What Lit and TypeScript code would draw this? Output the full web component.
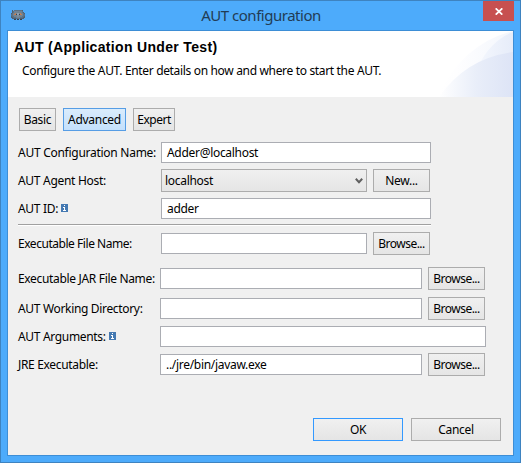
import { LitElement, html, css, svg, nothing } from "lit";
import { customElement } from "lit/decorators.js";
import { classMap } from "lit/directives/class-map.js";

interface Row {
  label: string;
  cls: string;
  value?: string;
  info?: boolean;
  combo?: boolean;
  button?: string;
}

const GENERAL: Row[] = [
  { label: "AUT Configuration Name:", cls: "name", value: "Adder@localhost" },
  { label: "AUT Agent Host:", cls: "host", value: "localhost", combo: true, button: "New..." },
  { label: "AUT ID:", cls: "id", value: "adder", info: true },
];

const EXECUTION: Row[] = [
  { label: "Executable File Name:", cls: "exec", button: "Browse..." },
  { label: "Executable JAR File Name:", cls: "wide jar", button: "Browse..." },
  { label: "AUT Working Directory:", cls: "wide dir", button: "Browse..." },
  { label: "AUT Arguments:", cls: "wide args", info: true },
  { label: "JRE Executable:", cls: "wide jre", value: "../jre/bin/javaw.exe", button: "Browse..." },
];

const OWL = [
  ".5.666666665..",
  ".56777777776..",
  ".567777777765.",
  "5677o7997o7765",
  "667oo3993oo766",
  "66777788777766",
  "56677788777665",
  "55666777766655",
  ".555566665555.",
  "...44.44.44...",
];
const OWL_COLORS: Record<string, string> = {
  "3": "#3c4149", "4": "#38424d", "5": "#4f6272", "6": "#5c7185",
  "7": "#6f8393", "8": "#7e8d9c", "9": "#93a0ad", o: "#c08058",
};

@customElement("app-root")
export class AppRoot extends LitElement {
  static styles = css`
    :host {
      display: block;
      box-sizing: border-box;
      width: 521px;
      height: 463px;
      border: 1px solid #3e83c0;
      background: #4dabfb;
      font: 12px/16px "Noto Sans", "Open Sans", sans-serif;
      letter-spacing: -0.3px;
      color: #000;
      overflow: hidden;
      white-space: nowrap;
    }
    * { box-sizing: border-box; }
    svg { display: block; }
    .titlebar { display: grid; grid-template-columns: 31px 1fr 31px; height: 29px; padding-right: 6px; }
    .owl { margin: 9px 0 0 10px; }
    .title { text-align: center; font-size: 15px; line-height: 29px; color: #223c55; letter-spacing: -0.48px; padding-left: 7px; }
    .close { height: 20px; background: #c75050; display: grid; place-items: center; }
    .client { margin: 0 6px; height: 426px; border: 1px solid #3d8ed6; background: #f0f0f0; }
    .banner { position: relative; height: 66px; background: #fff; padding: 8px 0 0 6px; }
    .banner h1 { margin: 0; font: bold 14px/17px "Liberation Sans", sans-serif; letter-spacing: 0.33px; }
    .banner p { margin: 7px 0 0 8px; letter-spacing: -0.335px; }
    .swoosh { position: absolute; right: 0; top: 0; }
    .tabs { display: flex; gap: 7px; padding: 11px 0 0 11px; }
    .btn {
      height: 23px; width: 57px; border: 1px solid #acacac;
      background: linear-gradient(#f0f0f0, #e5e5e5);
      text-align: center; line-height: 21px; flex: none;
    }
    .basic { width: 37px; }
    .advanced { width: 63px; border-color: #569de5; background: linear-gradient(#daecfc, #c4e0fc); }
    .expert { width: 42px; letter-spacing: -0.5px; }
    .form { padding: 10px 0 0 10px; }
    .row { display: flex; align-items: center; height: 23px; }
    .row .btn { letter-spacing: -0.5px; }
    .host .btn { letter-spacing: -0.3px; }
    .label { width: 143px; display: flex; align-items: center; gap: 3px; line-height: 21px; flex: none; }
    .label svg { margin-top: -1px; }
    .name .label { letter-spacing: -0.27px; }
    .exec .label { letter-spacing: -0.46px; }
    .jar .label, .dir .label, .args .label, .jre .label { letter-spacing: -0.33px; }
    .wide .label { width: 142px; }
    .field { height: 21px; width: 270px; background: #fff; border: 1px solid #abadb3; padding-left: 5px; line-height: 20px; }
    .host .field, .exec .field { width: 206px; margin-right: 6px; }
    .wide .field { width: 262px; margin-right: 6px; }
    .args .field { width: 326px; }
    .host .combo {
      height: 23px; border-color: #acacac; background: linear-gradient(#f0f0f0, #e5e5e5);
      padding: 0 3px 0 3px; display: flex; align-items: center; justify-content: space-between;
    }
    .host, .id { margin-top: 5px; }
    .rule { width: 413px; height: 2px; margin: 4px 0 6px; background: #a0a0a0; border-bottom: 1px solid #fff; }
    .jar { margin-top: 12px; }
    .dir { margin-top: 7px; }
    .args, .jre { margin-top: 5px; }
    .actions { display: flex; justify-content: flex-end; gap: 8px; margin: 42px 12px 0 0; }
    .actions .btn { width: 90px; }
    .actions .ok { border-color: #3399ff; }
  `;

  private owl() {
    return html`<svg class="owl" width="14" height="10" viewBox="0 0 14 10" shape-rendering="crispEdges">
      ${OWL.map((line, y) => [...line].map((c, x) =>
        c === "." ? nothing : svg`<rect x=${x} y=${y} width="1" height="1" fill=${OWL_COLORS[c]}></rect>`))}
    </svg>`;
  }

  private infoIcon() {
    return html`<svg width="7" height="8" viewBox="0 0 7 8" shape-rendering="crispEdges">
      <rect width="7" height="8" rx="1" fill="#4479b2"></rect>
      <path d="M3 1h1v1H3zM2 3h2v3h1v1H2V6h1V4H2z" fill="#fff"></path>
    </svg>`;
  }

  private row(r: Row) {
    return html`<div class="row ${r.cls}">
      <div class="label"><span>${r.label}</span>${r.info ? this.infoIcon() : nothing}</div>
      <div class=${classMap({ field: true, combo: !!r.combo })}><span>${r.value ?? ""}</span>${r.combo
        ? html`<svg width="8" height="7" viewBox="0 0 8 7"><path d="M.8 1.8 4 5.2 7.2 1.8" fill="none" stroke="#606060" stroke-width="2"></path></svg>`
        : nothing}</div>
      ${r.button ? html`<div class="btn">${r.button}</div>` : nothing}
    </div>`;
  }

  render() {
    return html`
      <div class="titlebar">
        ${this.owl()}
        <div class="title">AUT configuration</div>
        <div class="close">
          <svg width="8" height="7" viewBox="0 0 8 7"><path d="M.7.3 7.3 6.7M7.3.3.7 6.7" stroke="#fff" stroke-width="1.7"></path></svg>
        </div>
      </div>
      <div class="client">
        <div class="banner">
          <svg class="swoosh" width="85" height="66" viewBox="0 0 85 66">
            <defs>
              <linearGradient id="a" x1="0" x2="1"><stop offset="0" stop-color="#fff"></stop><stop offset=".25" stop-color="#fefeff"></stop><stop offset="1" stop-color="#f3f6fc"></stop></linearGradient>
              <linearGradient id="b" x1="0" x2="1"><stop offset="0" stop-color="#f4f7fd"></stop><stop offset="1" stop-color="#e6ecf9"></stop></linearGradient>
              <linearGradient id="c" x1="0" x2="1"><stop offset="0" stop-color="#fff"></stop><stop offset=".5" stop-color="#e9eef9"></stop><stop offset="1" stop-color="#dde4f6"></stop></linearGradient>
            </defs>
            <path d="M10 66Q34 13 85 0V66Z" fill="url(#a)"></path>
            <path d="M50 36Q62 10 85 1V36Z" fill="url(#b)"></path>
            <path d="M11 66Q38 27 85 21V66Z" fill="url(#c)"></path>
          </svg>
          <h1>AUT (Application Under Test)</h1>
          <p>Configure the AUT. Enter details on how and where to start the AUT.</p>
        </div>
        <div class="tabs">
          <div class="btn basic">Basic</div>
          <div class="btn advanced">Advanced</div>
          <div class="btn expert">Expert</div>
        </div>
        <div class="form">
          ${GENERAL.map((r) => this.row(r))}
          <div class="rule"></div>
          ${EXECUTION.map((r) => this.row(r))}
        </div>
        <div class="actions">
          <div class="btn ok">OK</div>
          <div class="btn">Cancel</div>
        </div>
      </div>
    `;
  }
}
